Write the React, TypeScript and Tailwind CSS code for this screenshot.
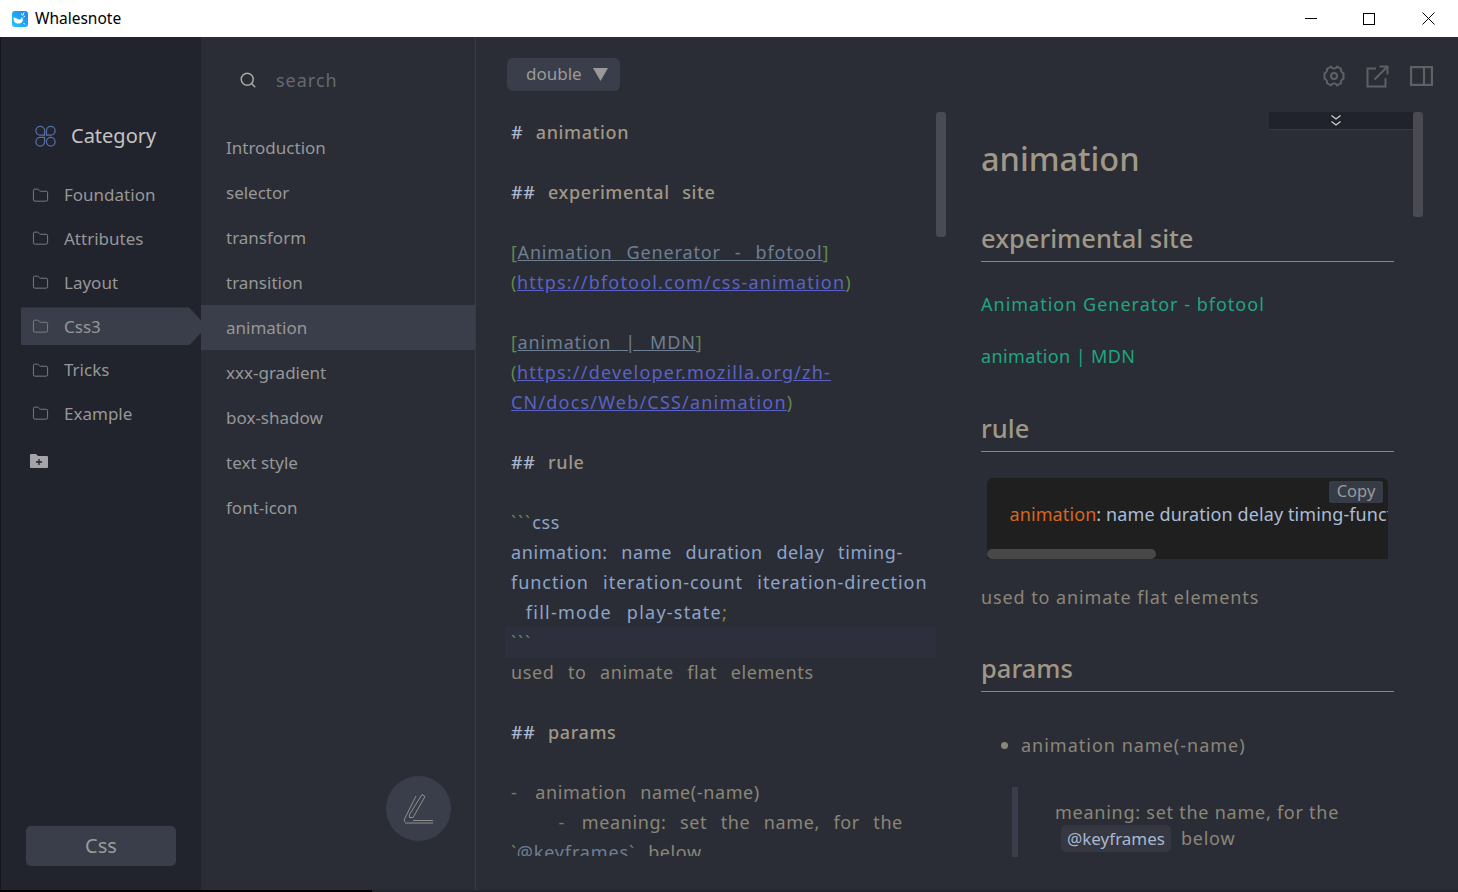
import { Folder, Search } from 'lucide-react'

const font = "[font-family:'Noto_Sans','Noto_Sans_CJK_SC',sans-serif]"

const cats = ['Foundation', 'Attributes', 'Layout', 'Css3', 'Tricks', 'Example']
const notes = ['Introduction', 'selector', 'transform', 'transition', 'animation', 'xxx-gradient', 'box-shadow', 'text style', 'font-icon']

function WhaleLogo() {
  return (
    <svg width="16" height="16" viewBox="0 0 16 16">
      <defs>
        <linearGradient id="logo" x1="0" y1="1" x2="1" y2="0">
          <stop offset="0" stopColor="#27c4f5" />
          <stop offset="1" stopColor="#1a86f0" />
        </linearGradient>
      </defs>
      <rect width="16" height="16" rx="3" fill="url(#logo)" />
      <path d="M1.500 6.500c2.500 0 4 2 6.500 2 1 0 1.500-1 1.500-2.500 1.500 1 2 3.500.5 5-1.500 2-5.500 2-7 .5-1-1-1.500-3-1.500-5z" fill="#fff" />
      <path d="M9.500 2.500l.8 2M12 1.500l-1 2.800M13 5l-1.500 1M11.500 12l1.500 1.500" stroke="#fff" strokeWidth="1" />
    </svg>
  )
}

function CategoryIcon() {
  return (
    <svg width="23" height="23" viewBox="0 0 24 24" fill="none" stroke="#5a6ea8" strokeWidth="1.300">
      <path d="M6.500 1.500a4.500 4.500 0 0 1 4.500 4.500v4.500H6.500a4.500 4.500 0 0 1 0-9z" />
      <path d="M17.500 1.500a4.500 4.500 0 0 1 0 9H13V6a4.500 4.500 0 0 1 4.500-4.500z" />
      <path d="M6.500 13H11v4.500a4.500 4.500 0 1 1-4.500-4.500z" />
      <circle cx="17.500" cy="17.500" r="4.500" />
    </svg>
  )
}

function PenIcon() {
  return (
    <svg width="32" height="34" viewBox="0 0 32 34" fill="none" stroke="#8f8f8f" strokeWidth="1">
      <path d="M19 2.500l3 2-12 21h-3.500v-3z" />
      <path d="M2 30l-1-2 12-24M2 31h28M10 28.500h20" />
    </svg>
  )
}

function NewFolderIcon() {
  return (
    <svg width="18" height="16" viewBox="0 0 18 16">
      <path d="M0 2a1 1 0 0 1 1-1h5l2 2h9a1 1 0 0 1 1 1v10a1 1 0 0 1-1 1H1a1 1 0 0 1-1-1z" fill="#a3a3a8" />
      <path d="M6 9h6M9 6v6" stroke="#21232d" strokeWidth="1.300" />
    </svg>
  )
}

function GearIcon() {
  return (
    <svg width="22" height="24" viewBox="0 0 22 24" fill="none" stroke="currentColor" strokeWidth="2" strokeLinejoin="round">
      <path d="M8 2.500c.5 1.500 1.500 2 3 2s2.500-.5 3-2l4 2.300c-.5 1.700 0 2.700 1 3.500l1.500 1v5.400l-1.500 1c-1 .8-1.500 1.800-1 3.500l-4 2.300c-.5-1.500-1.500-2-3-2s-2.500.5-3 2l-4-2.300c.5-1.700 0-2.700-1-3.500l-1.500-1V9.300l1.500-1c1-.8 1.500-1.800 1-3.500z" />
      <circle cx="11" cy="12" r="3" />
    </svg>
  )
}

function OpenIcon() {
  return (
    <svg width="23" height="23" viewBox="0 0 23 23" fill="none" stroke="currentColor" strokeWidth="2">
      <path d="M10 3.500H1.500v18h18V13M8.500 14.500L21 2M13.500 1.500h8v8" />
    </svg>
  )
}

function DoubleChevron() {
  return (
    <svg width="12" height="13" viewBox="0 0 12 13" fill="none" stroke="#d2d2d2" strokeWidth="1.200">
      <path d="M1.500 1.500L6 5l4.500-3.500M1.500 7.500L6 11l4.500-3.500" />
    </svg>
  )
}

function WindowBtn({ w, children }: { w: string; children: React.ReactNode }) {
  return <div className={w + ' h-[37px] flex items-center justify-center'}>{children}</div>
}

function Sidebar() {
  return (
    <div className="w-[200px] shrink-0 bg-[#21232d] flex flex-col pl-[20px] relative">
      <div className="flex items-center h-[40px] mt-[79px] pl-[13px]">
        <CategoryIcon />
        <span className="ml-[14px] text-[20px] text-[#c4c4c4]">Category</span>
      </div>
      <div className="mt-[20px] flex flex-col">
        {cats.map((c) => (
          <div
            key={c}
            className={
              'h-[38px] mb-[5.800px] flex items-center pl-[11px] text-[17px] text-[#979797] ' +
              (c === 'Css3' ? 'bg-[#3a3e4a] [clip-path:polygon(0_0,168px_0,186px_19px,168px_100%,0_100%)]' : '')
            }
          >
            <Folder size={17} strokeWidth={1.200} className="text-[#8a8a8a]" />
            <span className="ml-[15px]">{c}</span>
          </div>
        ))}
      </div>
      <div className="ml-[9px] mt-[14px]"><NewFolderIcon /></div>
      <div className="mt-auto mb-[24px] ml-[5px] w-[150px] h-[40px] rounded-[5px] bg-[#3a3e4a] flex items-center justify-center text-[20px] text-[#9a9a9a]">
        Css
      </div>
    </div>
  )
}

function NoteList() {
  return (
    <div className="w-[275px] shrink-0 bg-[#2a2d35] border-r border-r-[#383b43] relative flex flex-col">
      <div className="flex items-center h-[40px] mt-[23px] pl-[38px]">
        <Search size={18} strokeWidth={2} className="text-[#a8a8a8]" />
        <span className="ml-[19px] text-[18px] tracking-[1px] text-[#666870]">search</span>
      </div>
      <div className="mt-[25px] flex flex-col">
        {notes.map((n) => (
          <div
            key={n}
            className={'h-[45px] flex items-center pl-[25px] text-[17px] text-[#979797] ' + (n === 'animation' ? 'bg-[#3a3e4a]' : '')}
          >
            {n}
          </div>
        ))}
      </div>
      <div className="absolute left-[185px] top-[739px] w-[65px] h-[65px] rounded-full bg-[#3a3e4a] flex items-center justify-center">
        <PenIcon />
      </div>
    </div>
  )
}

const tan = 'text-[#a09787]'
const green = 'text-[#5f8a4c]'
const gray = 'text-[#8b8679]'
const blue = 'text-[#8ea4c8]'
const link = 'text-[#5b62c4] underline tracking-[1.200px]'
const linkText = 'text-[#6e7f92] underline tracking-[0.850px]'
const head = 'font-medium [word-spacing:1px]'

function Line({ children, className = '' }: { children?: React.ReactNode; className?: string }) {
  return <div className={'h-[30px] leading-[30px] whitespace-pre ' + className}>{children}</div>
}

function Editor() {
  return (
    <div className="h-[744px] overflow-hidden ml-[29px] pt-[5px] w-[431px] text-[18px] tracking-[0.6px] [word-spacing:1.500px]">
      <div className="pl-[6px]">
        <Line className={head}><span className="text-[#a9b7d0]">#</span><span className={tan}>  animation</span></Line>
        <Line />
        <Line className={head}><span className="text-[#a9b7d0]">##</span><span className={tan}>  experimental  site</span></Line>
        <Line />
        <Line><span className={green}>[</span><span className={linkText}>Animation  Generator  -  bfotool</span><span className={green}>]</span></Line>
        <Line><span className={green}>(</span><span className={link}>https://bfotool.com/css-animation</span><span className={green}>)</span></Line>
        <Line />
        <Line><span className={green}>[</span><span className={linkText}>animation  |  MDN</span><span className={green}>]</span></Line>
        <Line><span className={green}>(</span><span className={link}>https://developer.mozilla.org/zh-</span></Line>
        <Line><span className={link}>CN/docs/Web/CSS/animation</span><span className={green}>)</span></Line>
        <Line />
        <Line className={head}><span className="text-[#a9b7d0]">##</span><span className={tan}>  rule</span></Line>
        <Line />
        <Line><span className={green + ' tracking-[2px]'}>```</span><span className={blue}>css</span></Line>
        <Line className={blue}>animation:  name  duration  delay  timing-</Line>
        <Line className={blue + ' tracking-[0.950px]'}>function  iteration-count  iteration-direction</Line>
        <Line className={blue + ' tracking-[1.250px]'}>  fill-mode  play-state<span className="text-[#a8861c]">;</span></Line>
      </div>
      <Line className="bg-[#2d303c] pl-[6px]"><span className={green + ' tracking-[2px]'}>```</span></Line>
      <div className="pl-[6px]">
        <Line className={gray}>used  to  animate  flat  elements</Line>
        <Line />
        <Line className={head}><span className="text-[#a9b7d0]">##</span><span className={tan}>  params</span></Line>
        <Line />
        <Line className={gray}><span className={green + ' tracking-[5px]'}>-</span>  animation  name(-name)</Line>
        <Line className={gray}>       <span className={green + ' tracking-[4px]'}>-</span>  meaning:  set  the  name,  for  the</Line>
        <Line className={gray}><span className={green}>`</span><span className={linkText}>@keyframes</span><span className={green}>`</span>  below</Line>
      </div>
    </div>
  )
}

const h2 = 'h-[42px] border-b border-b-[#8b8679] text-[25.500px] leading-[36px] font-medium text-[#a09787]'

function Preview() {
  return (
    <div className="w-[413px] text-[#8b8679] text-[18px] tracking-[1px]">
      <div className="text-[32.500px] leading-[44px] font-medium tracking-normal text-[#a09787] mt-[25px]">animation</div>
      <div className={'mt-[39px] tracking-normal ' + h2}>experimental site</div>
      <div className="mt-[28px] leading-[28px] text-[#1fa580]">Animation Generator - bfotool</div>
      <div className="mt-[24px] leading-[28px] text-[#1fa580] tracking-[0.4px]">animation | MDN</div>
      <div className={'mt-[40px] tracking-normal ' + h2}>rule</div>
      <div className="relative mt-[26px] ml-[6px] w-[401px] h-[81px] bg-[#1f1f1f] rounded-t-[6px] overflow-hidden">
        <div className="pl-[22.500px] pt-[22px] leading-[28px] whitespace-nowrap tracking-[0.1px]">
          <span className="text-[#d9661f]">animation</span><span className="text-[#b8c4d4]">: </span>
          <span className="text-[#a9bdd8]">name duration delay timing-function iteration-count</span>
        </div>
        <div className="absolute right-[5px] top-[3px] h-[22px] w-[54px] rounded-[2px] bg-[#363b48] text-center text-[16.500px] leading-[20px] tracking-normal text-[#9a9a9a]">Copy</div>
        <div className="absolute left-0 bottom-0 h-[10px] w-[169px] rounded-[5px] bg-[#484848]" />
      </div>
      <div className="mt-[24px] leading-[28px] tracking-[0.9px]">used to animate flat elements</div>
      <div className={'mt-[39px] tracking-normal ' + h2}>params</div>
      <div className="mt-[39px] ml-[20px] flex items-center leading-[28px]">
        <span className="w-[7px] h-[7px] rounded-full bg-[#8b8679] mr-[13px]" />
        animation name(-name)
      </div>
      <div className="mt-[28px] ml-[31px] border-l-[6px] border-l-[#3a3e4a] h-[70px] pl-[37px] pt-[12px] leading-[26px] whitespace-nowrap tracking-[0.75px]">
        <div>meaning: set the name, for the</div>
        <div><span className="ml-[6px] px-[6px] py-[2px] rounded-[5px] bg-[#353841] text-[#a9b7d0] text-[17px] tracking-normal">@keyframes</span><span className="ml-[10px]">below</span></div>
      </div>
    </div>
  )
}

export default function App() {
  return (
    <div className={font + ' w-[1458px] h-[892px] overflow-hidden flex flex-col bg-white'}>
      <div className="h-[37px] shrink-0 flex items-center justify-between bg-white pl-[12px]">
        <div className="flex items-center">
          <WhaleLogo />
          <span className="ml-[7px] text-[15.500px] text-black">Whalesnote</span>
        </div>
        <div className="flex">
          <WindowBtn w="w-[59px]"><div className="w-[12px] h-px bg-black" /></WindowBtn>
          <WindowBtn w="w-[58px]"><div className="w-[12px] h-[12px] border border-black" /></WindowBtn>
          <WindowBtn w="w-[60px]">
            <svg width="13" height="13" viewBox="0 0 13 13" stroke="#000" strokeWidth="1"><path d="M.5.5l12 12M12.500.5l-12 12" /></svg>
          </WindowBtn>
        </div>
      </div>
      <div className="flex-1 min-h-0 flex border-l border-l-[#15161c] border-b-[2px] border-b-[#23252c] relative">
        <Sidebar />
        <NoteList />
        <div className="flex-1 bg-[#2a2d35] relative flex flex-col min-w-0">
          <div className="h-[75px] shrink-0 flex items-start justify-between pt-[21px] pl-[31px] pr-[25px]">
            <div className="h-[33px] w-[113px] rounded-[6px] bg-[#3a3e4a] flex items-center pl-[19px] pb-px text-[17px] text-[#9a9a9a]">
              double
              <svg className="ml-[11px]" width="15" height="13" viewBox="0 0 15 13"><path d="M0 0h15l-7.500 13z" fill="#999" /></svg>
            </div>
            <div className="flex items-center gap-[21px] pt-[6px] text-[#5f6064]">
              <GearIcon />
              <OpenIcon />
              <svg width="23" height="20" viewBox="0 0 23 20" fill="none" stroke="currentColor" strokeWidth="2.200"><rect x="1.100" y="1.100" width="20.800" height="17.800" /><path d="M14 1.100v17.800" /></svg>
            </div>
          </div>
          <div className="flex-1 min-h-0 flex">
            <Editor />
            <div className="w-[10px] h-[125px] rounded-[3px] bg-[#494a52] shrink-0" />
            <div className="ml-[35px] h-full overflow-hidden relative"><Preview /></div>
            <div className="ml-[19px] w-[10px] h-[105px] rounded-[3px] bg-[#494a52] shrink-0" />
          </div>
          <div className="absolute left-[793px] top-[75px] w-[144px] h-[18px] bg-[#20222c] border-b border-b-[#383b45] flex items-center justify-center pr-[10px]">
            <DoubleChevron />
          </div>
        </div>
        <div className="absolute left-[-1px] bottom-[-2px] w-[372px] h-[2px] bg-black" />
      </div>
    </div>
  )
}
